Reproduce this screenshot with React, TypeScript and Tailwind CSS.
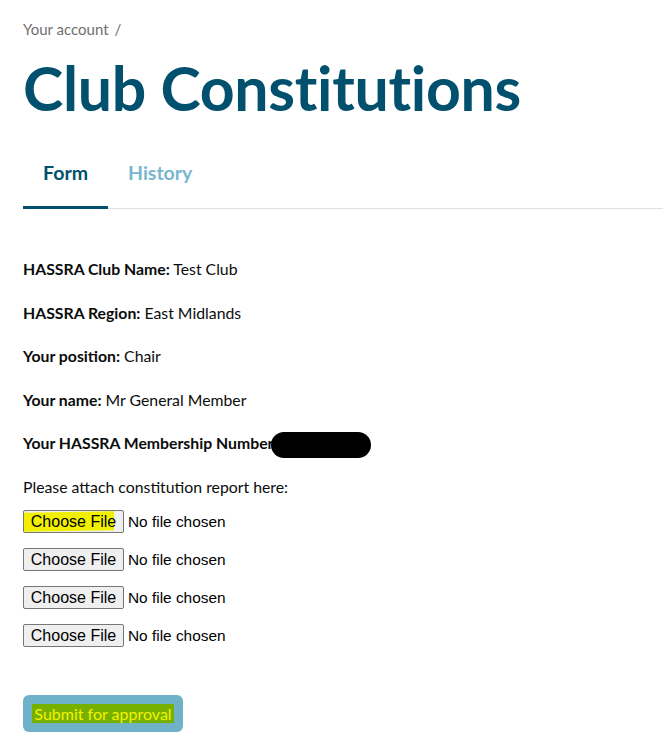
import React from "react";

const fields = [
    { label: "HASSRA Club Name:", value: "Test Club" },
    { label: "HASSRA Region:", value: "East Midlands" },
    { label: "Your position:", value: "Chair" },
    { label: "Your name:", value: "Mr General Member" },
];

function FileRow({ highlight }: { highlight?: boolean }) {
    return (
        <div className="flex items-center h-[38px] font-['Liberation_Sans',Arial,sans-serif] text-[16px] text-black">
            <span className="relative h-[23px] w-[101px] border border-[#767676] rounded-[2px] bg-[#efefef] flex items-center justify-center">
                {highlight && <span className="absolute left-0 top-[1px] h-[19px] w-[90px] bg-[#f0f000] -skew-y-1" />}
                <span className="relative">Choose File</span>
            </span>
            <span className="ml-[4px] text-[15.4px]">No file chosen</span>
        </div>
    );
}

export default function App() {
    return (
        <div className="min-h-[753px] w-[663px] bg-white font-['Lato',sans-serif] text-[#0b0c0c] overflow-hidden">
            <div className="pl-[23px] pt-[19px]">
                <nav className="text-[15px] text-[#6f6f6f] leading-[20px]">
                    Your account <span className="ml-[2px]">/</span>
                </nav>

                <h1 className="mt-[14px] text-[60.8px] font-bold leading-[70px] text-[#00506e] tracking-[-0.3px]">
                    Club Constitutions
                </h1>

                {/* Tabs */}
                <div className="mt-[38px] flex border-b border-[#e1e1e1]">
                    <div className="w-[85px] pb-[21px] text-center text-[19.5px] font-bold text-[#00506e] border-b-[3px] border-[#00506e] -mb-[1px] leading-[24px]">
                        Form
                    </div>
                    <div className="ml-[20px] pb-[21px] text-[19.5px] font-bold text-[#79b7d0] leading-[24px]">
                        History
                    </div>
                </div>

                <div className="mt-[50px] text-[15.8px] leading-[20px]">
                    {fields.map(f => (
                        <p key={f.label} className="h-[43.5px]">
                            <b>{f.label}</b> {f.value}
                        </p>
                    ))}
                    <p className="h-[43.5px] flex items-start">
                        <b>Your HASSRA Membership Number</b>
                        <span className="-ml-[3px] -mt-[1px] h-[26px] w-[100px] rounded-full bg-black inline-block" />
                    </p>
                    <p className="h-[26px]">Please attach constitution report here:</p>
                </div>

                <div className="flex flex-col">
                    <FileRow highlight />
                    <FileRow />
                    <FileRow />
                    <FileRow />
                </div>

                <button className="mt-[40px] h-[37px] w-[160px] rounded-[6px] bg-[#6fb1c7] flex items-center justify-center">
                    <span className="bg-[#78b000] text-[#f2f200] text-[16px] px-[2px] leading-[19px]">Submit for approval</span>
                </button>
            </div>
        </div>
    );
}
